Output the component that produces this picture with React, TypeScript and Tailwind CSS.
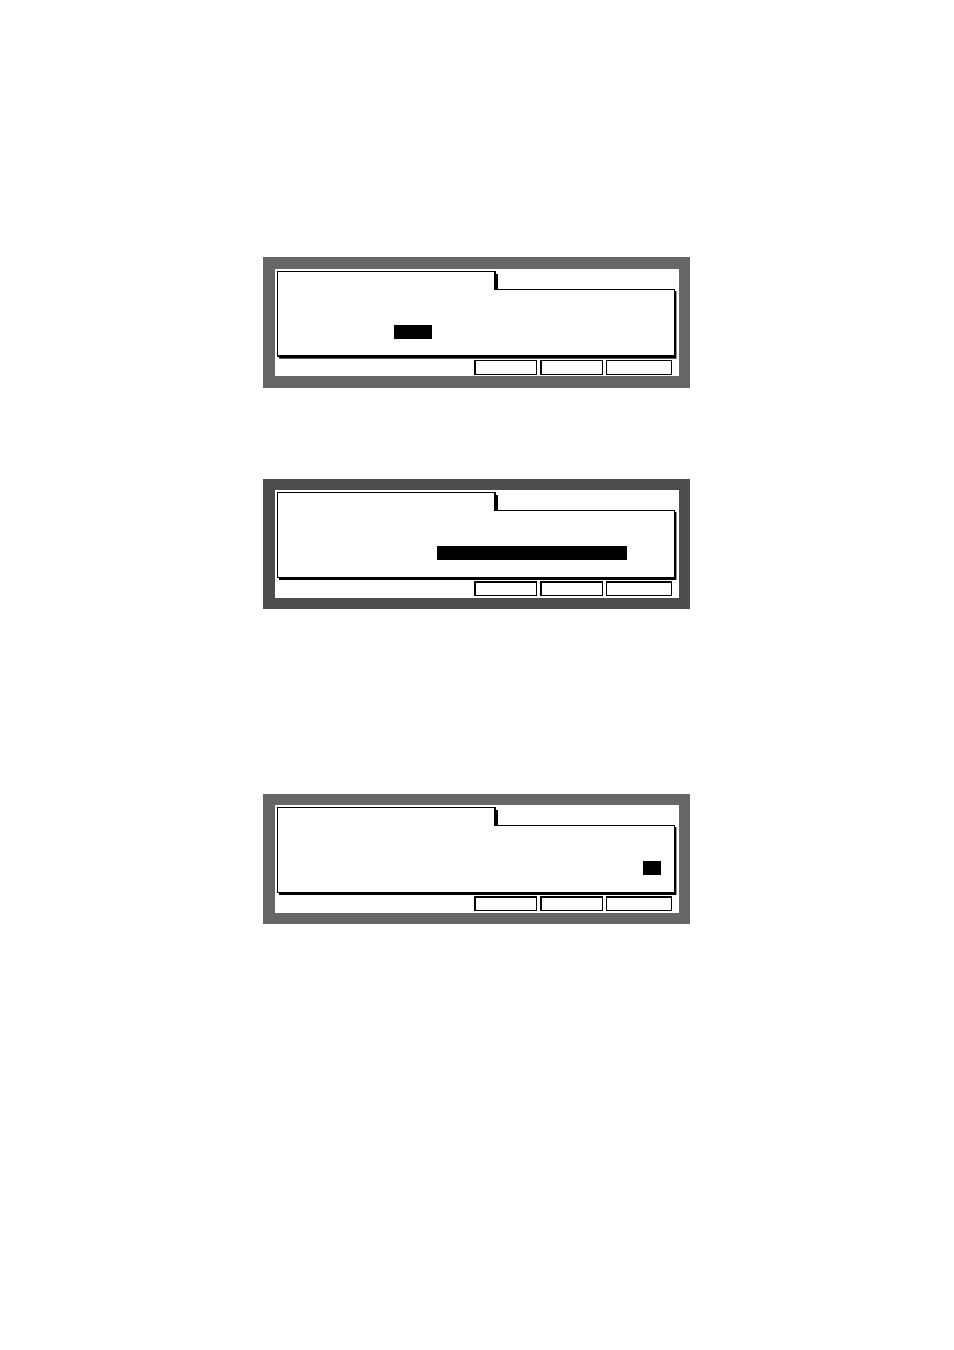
const SOFT_KEYS = [
  { id: "F4", size: "w-[63px] border-l-2" },
  { id: "F5", size: "w-[63px] border-l-2" },
  { id: "F6", size: "w-[66px] border-l" },
];

function LcdScreen({
  frame,
  cursor,
  softEdge = false,
}: {
  frame: string;
  cursor: string;
  softEdge?: boolean;
}) {
  return (
    <section className={`border-l-12 border-r-11 ${frame}`}>
      <div className={`bg-white pt-0.5 px-0.5 ${softEdge ? "pb-px" : "pb-0.5"}`}>
        <div className="flex">
          <div className="flex-1 min-w-0">
            {/* tab and the top edge of the window */}
            <div className="flex h-[19px] mr-px">
              <div className="w-[217px] border-l border-t border-black" />
              <div className="w-0.5 bg-black" />
              <div className="w-0.5 mt-[3px] bg-black" />
              <div className="flex-1 border-b border-black" />
            </div>

            <div className="flex">
              <div
                className={`flex-1 min-w-0 h-[67px] pt-[35px] border-l border-r border-black ${
                  softEdge ? "border-b-2" : "border-b"
                }`}
              >
                <div className={`h-3.5 bg-black ${cursor}`} />
              </div>
              <div className="w-px mt-px bg-black" />
            </div>

            {/* drop shadow below the window */}
            <div
              className={`ml-0.5 bg-black ${
                softEdge ? "h-0.5 border-b border-[#5f5f5f]" : "h-0.5"
              }`}
            />
          </div>
          <div className="w-px mt-5 bg-[#999999]" />
        </div>

        <div className="flex justify-end gap-[3px] mt-px mr-[5px]">
          {SOFT_KEYS.map((key) => (
            <button
              key={key.id}
              type="button"
              aria-label={key.id}
              className={`h-[15px] border-r border-b border-black bg-white ${key.size} ${
                softEdge ? "border-t" : "border-t-2"
              }`}
            />
          ))}
        </div>
      </div>
    </section>
  );
}

export default function App() {
  return (
    <div className="min-h-screen bg-white font-['Liberation_Sans',sans-serif]">
      <main className="mx-auto max-w-[428px] pt-[257px] pb-20 pr-px">
        <LcdScreen frame="border-y-12 border-[#666666]" cursor="ml-[116px] w-[38px]" softEdge />
        <div className="mt-[91px]">
          <LcdScreen frame="border-y-11 border-[#4c4c4c]" cursor="ml-[159px] w-[190px]" />
        </div>
        <div className="mt-[185px]">
          <LcdScreen frame="border-y-11 border-[#666666]" cursor="ml-[365px] w-[18px]" />
        </div>
      </main>
    </div>
  );
}
